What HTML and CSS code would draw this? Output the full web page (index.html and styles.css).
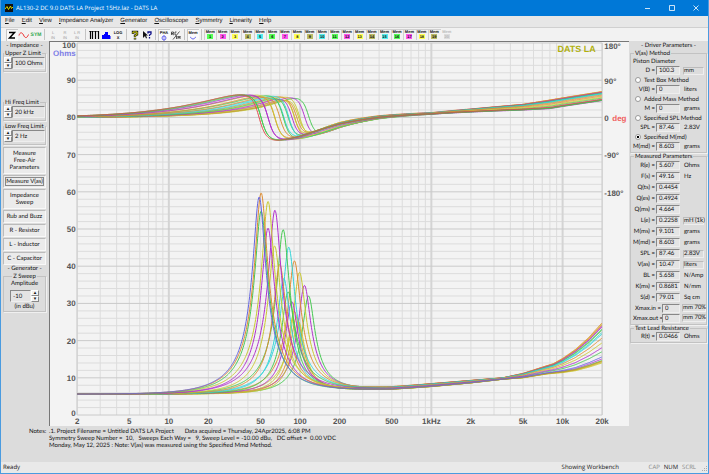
FILE: index.html
```
<!DOCTYPE html>
<html lang="en">
<head>
    <meta charset="UTF-8">
    <meta name="viewport" content="width=device-width, initial-scale=1.0">
    <title>AL130-2 DC 9.0 DATS LA Project 15Hz.laz - DATS LA</title>
    <link rel="stylesheet" href="styles.css">
</head>
<body>
    <!-- Title bar -->
    <header class="title-bar">
        <svg class="app-icon" viewBox="0 0 8 8"><rect width="8" height="8" fill="#111"/><path d="M0 5L2 2.500L3.500 5.500L5.500 2L6.500 4.500L8 3" fill="none" stroke="#d8d800"/></svg>
        <span class="title">AL130-2 DC 9.0 DATS LA Project 15Hz.laz - DATS LA</span>
        <button class="win-button" aria-label="Minimize"><svg viewBox="0 0 8 8"><path d="M1 4.500H6"/></svg></button>
        <button class="win-button" aria-label="Maximize"><svg viewBox="0 0 8 8"><path d="M1.500 1.500H6.500V6.500H1.500Z"/></svg></button>
        <button class="win-button" aria-label="Close"><svg viewBox="0 0 8 8"><path d="M1.500 1.500L6.500 6.500M6.500 1.500L1.500 6.500"/></svg></button>
    </header>

    <!-- Menu -->
    <nav class="menu">
        <button><u>F</u>ile</button>
        <button><u>E</u>dit</button>
        <button><u>V</u>iew</button>
        <button><u>I</u>mpedance Analyzer</button>
        <button><u>G</u>enerator</button>
        <button><u>O</u>scilloscope</button>
        <button><u>S</u>ymmetry</button>
        <button><u>L</u>inearity</button>
        <button><u>H</u>elp</button>
    </nav>

    <!-- Toolbar -->
    <div class="toolbar">
        <button class="tool pressed" aria-label="Impedance"><svg viewBox="0 0 12 12"><path d="M3 3.500H8.500L3.500 9H9" fill="none" stroke="#000" stroke-width="1.500"/></svg></button>
        <button class="tool" aria-label="Sine"><svg viewBox="0 0 12 12"><path d="M1 6.500C2 3 4 3 5.500 6C7 9.500 9 9.500 10.500 5.500" fill="none" stroke="#e33"/></svg></button>
        <button class="tool sym">SYM</button>
        <span class="sep"></span>
        <button class="tool off" disabled>L<br>IN</button>
        <button class="tool off" disabled>R<br>IN</button>
        <button class="tool off" disabled>L R<br>IN</button>
        <span class="sep"></span>
        <button class="tool" aria-label="Bars"><svg viewBox="0 0 12 12"><path d="M2.500 2V10M4.500 2V10M7.500 2V10M10.500 2V10" stroke="#000" stroke-width="1.200"/><path d="M1 2.500H11" stroke="#000" stroke-width=".6"/></svg></button>
        <button class="tool" aria-label="Spectrum"><svg viewBox="0 0 12 12"><path d="M2 10V6H4V5H5V3H8V6H10V7H10.500V10Z" fill="#00f"/></svg></button>
        <button class="tool log">LOG<br>X</button>
        <span class="sep"></span>
        <button class="tool" aria-label="Help"><svg viewBox="0 0 12 12"><path d="M4 5V3H8V5.500L6 6.500V8M6 8.800V10.500" fill="none" stroke="#222" stroke-width="2.400"/><path d="M4 4.500V3H8V5.500L6 6.500V7.700M6 9V10" fill="none" stroke="#dd0"/></svg></button>
        <button class="tool" aria-label="Context help"><svg viewBox="0 0 12 12"><path d="M2 2V9L4 7L5 9.500L6 9L5 6.500H7Z" fill="#111"/><path d="M7 4.500V3H10V5L8.500 6V7M8.500 8V9.500" fill="none" stroke="#118" stroke-width="1.300"/></svg></button>
        <span class="sep"></span>
        <button class="tool pressed pha" aria-label="Phase">PHA<svg viewBox="0 0 6 6"><circle cx="3" cy="3" r="2" fill="none" stroke="#66e"/><path d="M3 0V6" stroke="#66e" stroke-width=".7"/></svg></button>
        <button class="tool" aria-label="Real and imaginary"><svg viewBox="0 0 12 12"><path d="M1.500 6V3H3.500V4.500H1.500L4 6M6.500 3H5V6H6.500M3 10.500L9.500 2.500M6.500 7V10M8 10V7L9 9L10 7V10" fill="none" stroke="#333" stroke-width=".8"/></svg></button>
        <span class="sep"></span>
        <button class="tool pressed pha" aria-label="Memory">Mem<svg viewBox="0 0 6 6"><path d="M0 2C1 2 1 4 3 4S5 2 6 2" fill="none" stroke="#66e"/></svg></button>
        <span class="sep"></span>
        <div class="mem-group">
            <button class="mem green">Mem<b>1</b></button>
            <button class="mem pink">Mem<b>2</b></button>
            <button class="mem yellow">Mem<b>3</b></button>
            <button class="mem olive">Mem<b>4</b></button>
            <button class="mem cyan">Mem<b>5</b></button>
            <button class="mem green">Mem<b>6</b></button>
            <button class="mem pink">Mem<b>7</b></button>
            <button class="mem yellow">Mem<b>8</b></button>
            <button class="mem olive">Mem<b>9</b></button>
            <button class="mem cyan">Mem<b>10</b></button>
            <button class="mem green">Mem<b>11</b></button>
            <button class="mem pink">Mem<b>12</b></button>
            <button class="mem yellow">Mem<b>13</b></button>
            <button class="mem olive">Mem<b>14</b></button>
            <button class="mem cyan">Mem<b>15</b></button>
            <button class="mem green">Mem<b>16</b></button>
            <button class="mem pink">Mem<b>17</b></button>
            <button class="mem yellow">Mem<b>18</b></button>
            <button class="mem olive">Mem<b>19</b></button>
            <button class="mem empty" disabled>Mem<b>20</b></button>
        </div>
    </div>

    <main class="workbench">
        <!-- Impedance and generator controls -->
        <aside class="left-panel">
            <h2>- Impedance -</h2>
            <fieldset class="limit upper">
                <legend><label for="upper-z">Upper Z Limit</label></legend>
                <div class="spin"><button aria-label="Up">▴</button><button aria-label="Down">▾</button></div>
                <input id="upper-z" value="100 Ohms">
            </fieldset>
            <fieldset class="limit">
                <legend><label for="hi-freq">Hi Freq Limit</label></legend>
                <div class="spin"><button aria-label="Up">▴</button><button aria-label="Down">▾</button></div>
                <input id="hi-freq" value="20 kHz">
            </fieldset>
            <fieldset class="limit">
                <legend><label for="low-freq">Low Freq Limit</label></legend>
                <div class="spin"><button aria-label="Up">▴</button><button aria-label="Down">▾</button></div>
                <input id="low-freq" value="2 Hz">
            </fieldset>
            <div class="actions">
                <button>Measure<br>Free-Air<br>Parameters</button>
                <button class="focused">Measure V(as)</button>
                <button>Impedance<br>Sweep</button>
                <button>Rub and Buzz</button>
                <button>R - Resistor</button>
                <button>L - Inductor</button>
                <button>C - Capacitor</button>
            </div>
            <h2>- Generator -</h2>
            <fieldset class="sweep">
                <legend>Z Sweep</legend>
                <label for="amplitude">Amplitude</label>
                <div class="sweep-row">
                    <input id="amplitude" value="-10">
                    <div class="spin"><button aria-label="Up">▴</button><button aria-label="Down">▾</button></div>
                </div>
                <span>(in dBu)</span>
            </fieldset>
        </aside>

        <!-- Impedance / phase plot -->
        <section class="chart">
            <svg id="plot" viewBox="0 0 579 385" role="img" aria-label="Impedance and phase against frequency"></svg>
        </section>

        <!-- Driver parameters -->
        <aside class="right-panel">
            <h2>- Driver Parameters -</h2>
            <fieldset class="vas">
                <legend>V(as) Method</legend>
                <div class="row">Piston Diameter</div>
                <div class="row"><label for="d">D =</label><input id="d" value="100.3"><button class="unit sunk">mm</button></div>
                <label class="choice"><input type="radio" name="method">Test Box Method</label>
                <div class="row"><label for="vb">V(B) =</label><input id="vb" value="0"><span class="unit">liters</span></div>
                <label class="choice"><input type="radio" name="method">Added Mass Method</label>
                <div class="row"><label for="m">M =</label><input id="m" value="0"><span class="unit">grams</span></div>
                <label class="choice"><input type="radio" name="method">Specified SPL Method</label>
                <div class="row"><label for="spl">SPL =</label><input id="spl" value="87.46"><span class="unit">2.83V</span></div>
                <label class="choice"><input type="radio" name="method" checked>Specified M(md)</label>
                <div class="row"><label for="md">M(md) =</label><input id="md" value="8.603"><span class="unit">grams</span></div>
            </fieldset>
            <fieldset class="measured">
                <legend>Measured Parameters</legend>
                <div class="row"><label for="p1">R(e) =</label><input id="p1" value="5.607" readonly><span class="unit">Ohms</span></div>
                <div class="row"><label for="p2">F(s) =</label><input id="p2" value="49.16" readonly><span class="unit">Hz</span></div>
                <div class="row"><label for="p3">Q(ts) =</label><input id="p3" value="0.4454" readonly><span class="unit"></span></div>
                <div class="row"><label for="p4">Q(es) =</label><input id="p4" value="0.4924" readonly><span class="unit"></span></div>
                <div class="row"><label for="p5">Q(ms) =</label><input id="p5" value="4.664" readonly><span class="unit"></span></div>
                <div class="row"><label for="p6">L(e) =</label><input id="p6" value="0.2258" readonly><button class="unit boxed">mH (1k)</button></div>
                <div class="row"><label for="p7">M(ms) =</label><input id="p7" value="9.101" readonly><span class="unit">grams</span></div>
                <div class="row"><label for="p8">M(md) =</label><input id="p8" value="8.603" readonly><span class="unit">grams</span></div>
                <div class="row"><label for="p9">SPL =</label><input id="p9" value="87.46" readonly><button class="unit boxed">2.83V</button></div>
                <div class="row"><label for="p10">V(as) =</label><input id="p10" value="10.47" readonly><button class="unit boxed">liters</button></div>
                <div class="row"><label for="p11">BL =</label><input id="p11" value="5.658" readonly><span class="unit">N/Amp</span></div>
                <div class="row"><label for="p12">K(ms) =</label><input id="p12" value="0.8681" readonly><span class="unit">N/mm</span></div>
                <div class="row"><label for="p13">S(d) =</label><input id="p13" value="79.01" readonly><span class="unit">Sq cm</span></div>
                <div class="row xmax"><label for="p14">Xmax.in =</label><input id="p14" value="0"><button class="unit boxed">mm 70%</button></div>
                <div class="row xmax"><label for="p15">Xmax.out =</label><input id="p15" value="0"><button class="unit boxed">mm 70%</button></div>
            </fieldset>
            <fieldset class="lead">
                <legend>Test Lead Resistance</legend>
                <div class="row"><label for="rt">R(t) =</label><input id="rt" value="0.0466"><span class="unit">Ohms</span></div>
            </fieldset>
        </aside>
    </main>

    <!-- Notes -->
    <section class="notes">
        <span class="notes-label">Notes:</span>
        <p>.1. Project Filename = Untitled DATS LA Project       Data acquired = Thursday, 24Apr2025, 6:08 PM
Symmetry Sweep Number =  10,   Sweeps Each Way =   9, Sweep Level = -10.00 dBu,   DC offset =  0.00 VDC
Monday, May 12, 2025 : Note: V(as) was measured using the Specified Mmd Method.</p>
    </section>

    <!-- Status bar -->
    <footer class="status">
        <span class="ready">Ready</span>
        <span class="message">Showing Workbench</span>
        <span class="key">CAP</span>
        <span class="key on">NUM</span>
        <span class="key">SCRL</span>
        <svg class="grip" viewBox="0 0 8 8"><path d="M6 2h1v1h-1zM4 4h1v1h-1zM6 4h1v1h-1zM2 6h1v1h-1zM4 6h1v1h-1zM6 6h1v1h-1z" fill="#aaa"/></svg>
    </footer>

    <script src="chart.js"></script>
</body>
</html>
```
FILE: styles.css
```
/* Window */
* {
    box-sizing: border-box;
}

body {
    margin: 0;
    height: 100vh;
    display: flex;
    flex-direction: column;
    overflow: hidden;
    background-color: #dcdcdc;
    border: 1px solid #4a9be0;
    border-top: none;
    font-family: Lato, "Liberation Sans", sans-serif;
    font-size: 6px;
    line-height: 7px;
    color: #111;
    text-rendering: geometricPrecision;
}

button,
input {
    font: inherit;
    color: inherit;
    text-rendering: inherit;
    margin: 0;
    padding: 0;
    border: none;
    border-radius: 0;
    background: none;
    min-width: 0;
}

h2 {
    margin: 0;
    font-size: 6px;
    font-weight: normal;
    line-height: 8px;
    text-align: center;
}

/* Title bar */
.title-bar {
    display: flex;
    align-items: center;
    height: 16px;
    flex: none;
    padding-left: 4px;
    background-color: #0078d7;
    color: white;
    font-family: "Open Sans", sans-serif;
}

.app-icon {
    width: 8px;
    height: 8px;
    margin-right: 3px;
}

.title {
    flex: 1;
}

.win-button {
    width: 24px;
    height: 16px;
}

.win-button svg {
    display: block;
    width: 8px;
    height: 8px;
    margin: 0 auto;
    fill: none;
    stroke: white;
    stroke-width: 0.8;
}

/* Menu */
.menu {
    display: flex;
    align-items: center;
    gap: 7px;
    height: 11px;
    flex: none;
    padding-left: 4px;
    background-color: #e7e7e7;
    font-family: "Liberation Sans", sans-serif;
}

/* Toolbar */
.toolbar {
    display: flex;
    height: 14px;
    flex: none;
    padding: 1px 0 1px 5px;
    background-color: #f2f2f2;
    border-top: 1px solid #d0d0d0;
    font-family: "Liberation Sans", sans-serif;
    font-size: 4px;
    line-height: 5px;
}

.tool {
    width: 12px;
    height: 12px;
    text-align: center;
}

.tool svg {
    display: block;
    width: 12px;
    height: 12px;
}

.pressed {
    background-color: #fafafa;
    box-shadow: inset 1px 1px #c8c8c8;
}

.sym {
    color: #2fa84f;
    font-size: 5px;
    font-weight: bold;
}

.off {
    color: #999;
}

.log,
.pha,
.mem {
    font-weight: bold;
}

.pha svg {
    width: 6px;
    height: 6px;
    margin: 0 auto;
}

.sep {
    width: 1px;
    margin: 0 2px;
    background-color: #c4c4c4;
}

.mem-group {
    display: grid;
    grid-template-columns: repeat(20, 1fr);
    width: 249px;
}

.mem {
    display: flex;
    flex-direction: column;
    align-items: center;
    box-shadow: inset 1px 1px #d0d0d0;
    line-height: 5px;
}

.mem b {
    width: 6px;
    line-height: 5px;
    text-align: center;
}

.green b { background-color: #5f5; }
.pink b { background-color: #f5e; }
.yellow b { background-color: #ff5; }
.olive b { background-color: #bb6; }
.cyan b { background-color: #5ee; }

.empty {
    color: #bbb;
    box-shadow: none;
}

.empty b {
    background-color: #ddd;
}

/* Main area */
.workbench {
    display: flex;
    flex: 1;
    min-height: 0;
}

fieldset {
    margin: 0;
    min-width: 0;
    border: 1px solid #c2c2c2;
    box-shadow: 1px 1px #f0f0f0;
}

legend {
    padding: 0 1px;
    line-height: 7px;
}

fieldset input {
    border: 1px solid #888;
    border-right-color: #eee;
    border-bottom-color: #eee;
    background-color: #e4e4e4;
    padding-left: 2px;
}

/* Left panel */
.left-panel {
    width: 48px;
    flex: none;
    padding: 1px 3px 0 2px;
}

.limit {
    display: flex;
    height: 22px;
    padding: 0;
    margin-bottom: 2px;
}

.upper {
    margin-bottom: 27px;
}

.limit input {
    flex: 1;
    height: 12px;
}

.spin {
    display: flex;
    flex-direction: column;
    width: 8px;
    flex: none;
}

.spin button {
    height: 6px;
    font-size: 5px;
    line-height: 4px;
    background-color: #f2f2f2;
    border: 1px solid #fff;
    border-right-color: #888;
    border-bottom-color: #888;
}

.actions {
    display: flex;
    flex-direction: column;
    gap: 1px;
}

.actions button {
    padding: 2px 0;
    background-color: #ebebeb;
    border: 1px solid #bbb;
    border-right-color: #f8f8f8;
    border-bottom-color: #f8f8f8;
    line-height: 7px;
    min-height: 13px;
}

.actions .focused {
    outline: 1px solid #888;
    outline-offset: -3px;
}

.sweep {
    padding: 0 6px 1px;
    text-align: center;
}

.sweep-row {
    display: flex;
    margin: 3px 0 1px;
}

.sweep-row input {
    flex: 1;
    height: 12px;
}

/* Chart */
.chart {
    flex: 1;
    min-width: 0;
    background-color: #f3f3f3;
    border-top: 1px solid #777;
    border-left: 1px solid #777;
}

.chart svg {
    display: block;
    width: 100%;
    height: 100%;
}

.chart text {
    font-family: "Liberation Sans", sans-serif;
    font-size: 8px;
    font-weight: bold;
    fill: #555;
}

.chart .unit-ohms { fill: #7b7be6; }
.chart .unit-deg { fill: #f06060; }
.chart .brand { font-size: 9px; fill: #b0b010; }

.minor { stroke: #dcdcdc; }
.major { stroke: #cacaca; }
.decade { stroke: #d4d4d4; stroke-width: 2; }

.curve {
    fill: none;
    stroke-width: 1;
    stroke-linejoin: round;
}

/* Right panel */
.right-panel {
    width: 79px;
    flex: none;
    padding: 1px 1px 0;
}

.right-panel fieldset {
    padding: 0 0 1px;
}

.right-panel legend {
    margin-left: 3px;
}

.row {
    display: flex;
    align-items: center;
    height: 9px;
    padding-left: 2px;
    white-space: nowrap;
}

.row label {
    width: 22px;
    flex: none;
    text-align: right;
}

.row input {
    width: 24px;
    height: 9px;
    margin-left: 1px;
}

.row .unit {
    flex: 1;
    height: 8px;
    margin-left: 3px;
    padding-left: 1px;
    text-align: left;
}

.row .sunk,
.row .boxed {
    border: 1px solid #bbb;
    border-right-color: #eee;
    border-bottom-color: #eee;
    padding-left: 0;
    margin-right: 2px;
    line-height: 6px;
}

.choice {
    display: flex;
    align-items: center;
    height: 10px;
    padding-left: 4px;
    white-space: nowrap;
}

.choice input {
    appearance: none;
    width: 6px;
    height: 6px;
    margin-right: 3px;
    padding: 0;
    border: 1px solid #999;
    border-radius: 50%;
    background-color: #fff;
}

.choice input:checked {
    background: radial-gradient(#000 40%, #fff 50%);
}

.measured .row {
    height: 11px;
}

.measured .xmax {
    height: 10px;
}

.xmax label {
    width: 28px;
}

.xmax input {
    width: 18px;
}

.xmax .boxed {
    margin-left: 2px;
    margin-right: 0;
}

/* Notes */
.notes {
    display: flex;
    flex: none;
    height: 36px;
    padding: 2px 0 0 28px;
}

.notes-label {
    width: 20px;
}

.notes p {
    margin: 0;
    white-space: pre;
}

/* Status bar */
.status {
    display: flex;
    align-items: center;
    height: 11px;
    flex: none;
    padding-left: 2px;
    background-color: #e9e9e9;
    font-family: "Open Sans", sans-serif;
}

.ready {
    flex: 1;
}

.message {
    width: 87px;
}

.key {
    margin-right: 4px;
    color: #888;
}

.on {
    color: #222;
}

.grip {
    width: 8px;
    height: 8px;
}
```
FILE: chart.js
```
const svg = document.getElementById("plot");

const ORANGE = "#dc8c30", BLUE = "#6464e0", YELLOW = "#c8c830", PURPLE = "#b030cc";
const GREEN = "#44c850", CYAN = "#30d4d8", RED = "#e04848";

// Scales: log frequency, ohms and degrees
const xOf = f => 250 + 131.6 * (Math.log10(f) - 2);
const yOf = z => 374 - 3.73 * z;
const yPhase = d => 76 - 0.414 * d;

function add(tag, attrs, text) {
    const el = document.createElementNS("http://www.w3.org/2000/svg", tag);
    for (const k in attrs) el.setAttribute(k, attrs[k]);
    if (text) el.textContent = text;
    svg.appendChild(el);
}

function line(x1, y1, x2, y2, cls) {
    add("line", { x1, y1, x2, y2, class: cls });
}

// Grid
const left = xOf(2), right = xOf(20000), top0 = yOf(100), bottom = yOf(0);
for (let z = 0; z <= 100; z += 2) {
    if (z % 10) line(left, yOf(z), right, yOf(z), "minor");
}
for (const d of [1, 10, 100, 1000, 10000]) {
    for (let n = 1; n < 10; n++) {
        const f = d * n;
        if (f < 2 || f > 20000) continue;
        line(xOf(f), top0, xOf(f), bottom, n === 1 ? "decade" : "minor");
    }
}
for (let z = 0; z <= 100; z += 10) line(left, yOf(z), right, yOf(z), "major");
line(left, top0, left, bottom, "major");
line(right, top0, right, bottom, "major");

// Axis labels
for (let z = 0; z <= 100; z += 10) {
    const y = z === 100 ? 6 : z === 0 ? 375 : yOf(z) + 3;
    add("text", { x: 25, y, "text-anchor": "end" }, String(z));
}
add("text", { x: 25, y: 14, "text-anchor": "end", class: "unit-ohms" }, "Ohms");
const ticks = { 2: "2", 5: "5", 10: "10", 20: "20", 50: "50", 100: "100", 200: "200", 500: "500", 1000: "1kHz", 2000: "2k", 5000: "5k", 10000: "10k", 20000: "20k" };
for (const f in ticks) add("text", { x: xOf(f), y: 383, "text-anchor": "middle" }, ticks[f]);
add("text", { x: 555, y: 7 }, "180°");
add("text", { x: 555, y: 42 }, "90°");
add("text", { x: 555, y: 79 }, "0");
add("text", { x: 563, y: 79, class: "unit-deg" }, "deg");
add("text", { x: 555, y: 116 }, "-90°");
add("text", { x: 555, y: 154 }, "-180°");
add("text", { x: 508, y: 10, class: "brand" }, "DATS LA");

// Voice coil contribution: [frequency, lowest sweep, highest sweep]
const zRise = [[2, 0, 0], [80, 0, 0.1], [150, 0.6, 0.8], [250, 0.9, 1.1], [500, 1.2, 1.8], [1000, 2, 2.8], [2000, 3, 3.7], [3500, 4, 4.4], [5000, 4.4, 5.6], [7500, 5.4, 7.6], [8500, 5.6, 8.2], [10000, 5.8, 9.6], [12500, 6.3, 12], [16000, 7.3, 15.4], [20000, 8.4, 19.2]];
const pRise = [[2, 0, 0], [50, 0, 0], [100, 3, 3], [200, 12, 12], [400, 15, 16], [1000, 15, 17], [2000, 17, 24], [5000, 20, 34], [8000, 23, 44], [10000, 28, 49], [20000, 42, 64]];

function rise(table, f, t) {
    let i = 1;
    while (i < table.length - 1 && table[i][0] < f) i++;
    const a = table[i - 1], b = table[i];
    const k = Math.log(f / a[0]) / Math.log(b[0] / a[0]);
    const va = a[1] + (a[2] - a[1]) * t, vb = b[1] + (b[2] - b[1]) * t;
    return va + (vb - va) * k;
}

// Sweeps: resonance (Hz), peak (ohms), impedance colour, phase colour, treble spread
const sweeps = [
    [116, 31.5, GREEN, GREEN, 0.85],
    [108, 34.4, PURPLE, PURPLE, 0.92],
    [99, 38, YELLOW, YELLOW, 0.97],
    [90.5, 41.2, ORANGE, ORANGE, 1],
    [97, 25, YELLOW, YELLOW, 0.05],
    [94, 26, ORANGE, ORANGE, 0.95],
    [90.5, 27.7, YELLOW, YELLOW, 0.02],
    [86.5, 30.3, PURPLE, PURPLE, 0.9],
    [81, 33, GREEN, GREEN, 0.82],
    [82, 45, CYAN, CYAN, 0.76],
    [75.2, 36.6, CYAN, CYAN, 0.72],
    [74.3, 49.8, GREEN, GREEN, 0.28],
    [70, 40.4, ORANGE, ORANGE, 0.62],
    [64, 45.4, YELLOW, ORANGE, 0.5],
    [64.3, 55, PURPLE, YELLOW, 0.38],
    [57, 57.4, YELLOW, PURPLE, 0],
    [57, 50.2, PURPLE, PURPLE, 0.1],
    [50.5, 54.8, GREEN, GREEN, 0.06],
    [50.5, 59.7, ORANGE, GREEN, 0.04],
    [48.8, 58.6, BLUE, RED, 0.15]
];

const RE = 5.607, Q = 4.664;

for (const [f0, peak, zColor, pColor, t] of sweeps) {
    let zPath = "", pPath = "";
    for (let x = left; x <= right + 0.1; x += 0.5) {
        const f = Math.pow(10, (x - 250) / 131.6 + 2);
        const u = Q * (f / f0 - f0 / f);
        const res = peak - RE;
        const re = RE + res / (1 + u * u);
        const im = -res * u / (1 + u * u);
        const z = Math.hypot(re, im) + rise(zRise, f, t);
        const p = Math.atan2(im, re) * 180 / Math.PI + rise(pRise, f, t);
        const cmd = zPath ? "L" : "M";
        zPath += cmd + x.toFixed(1) + " " + yOf(z).toFixed(1);
        pPath += cmd + x.toFixed(1) + " " + yPhase(p).toFixed(1);
    }
    add("path", { d: pPath, class: "curve", stroke: pColor });
    add("path", { d: zPath, class: "curve", stroke: zColor });
}
```
